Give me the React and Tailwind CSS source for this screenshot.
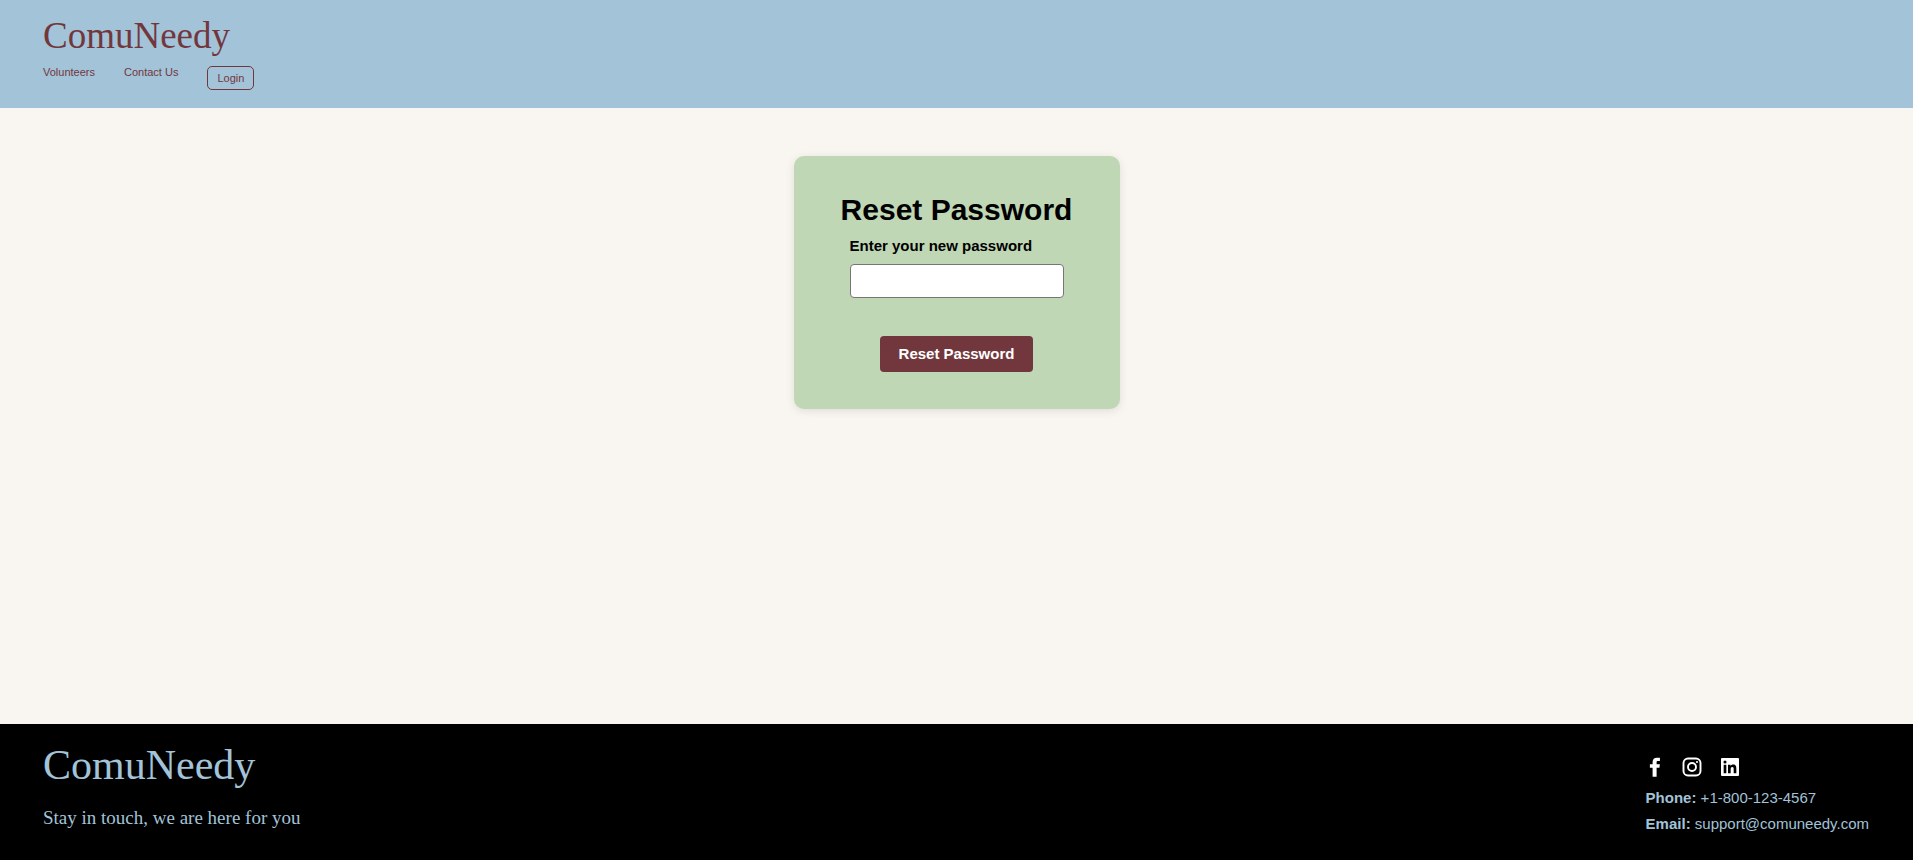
import React from "react";
import { BiLogoLinkedinSquare } from "react-icons/bi";

function FacebookIcon() {
  return (
    <svg width="24" height="24" viewBox="0 0 24 24" fill="currentColor" aria-hidden="true">
      <path d="M17.9 2.7v3.4h-2c-.9 0-1.3.4-1.3 1.3v1.9h3.3l-.5 3.5h-2.8v8.9h-4v-8.9H7.9V9.300h2.700V7c0-2.800 1.700-4.300 4.300-4.300z" />
    </svg>
  );
}

function InstagramIcon() {
  return (
    <svg width="24" height="24" viewBox="0 0 24 24" fill="none" stroke="currentColor" strokeWidth="1.900" aria-hidden="true">
      <rect x="3.500" y="3.500" width="17" height="17" rx="4.500" />
      <circle cx="12" cy="12" r="4" />
      <circle cx="17" cy="7" r="1.100" fill="currentColor" stroke="none" />
    </svg>
  );
}

function Header() {
  return (
    <header className="bg-[#a2c3d8] px-[43px] pt-4 pb-[18px] text-[#72373d]">
      <a href="#" className="block font-['Baskerville','Liberation_Serif',serif] text-[37px] leading-[40px]">
        ComuNeedy
      </a>
      <nav className="mt-[10px] flex items-start gap-[29px] text-[11px] leading-3">
        <a href="#volunteers">Volunteers</a>
        <a href="#contact">Contact Us</a>
        <a href="#login" className="rounded-[5px] border border-[#72373d] px-[9px] py-[5px]">Login</a>
      </nav>
    </header>
  );
}

function ResetForm() {
  return (
    <form
      onSubmit={(e) => e.preventDefault()}
      className="flex w-[326px] flex-col items-center rounded-[10px] bg-[#bfd7b5] px-10 pt-9 pb-[37px] shadow-[0_2px_10px_rgba(0,0,0,0.1)]"
    >
      <h1 className="text-[30px] leading-9 font-bold whitespace-nowrap">Reset Password</h1>
      <div className="mt-2 flex flex-col">
        <label htmlFor="new-password" className="text-[15px] leading-5 font-bold">
          Enter your new password
        </label>
        <input
          id="new-password"
          type="password"
          className="mt-2 h-[34px] w-[214px] rounded border border-[#767676] bg-white px-2 text-[15px]"
        />
      </div>
      <button type="submit" className="mt-[38px] h-9 rounded bg-[#72373d] px-[19px] text-[15px] font-bold text-white">
        Reset Password
      </button>
    </form>
  );
}

function Footer() {
  return (
    <footer className="flex items-start justify-between bg-black pt-4 pr-11 pb-[23px] pl-[43px] text-[#a2c3d8]">
      <div className="font-['Baskerville','Liberation_Serif',serif]">
        <p className="text-[42px] leading-[50px]">ComuNeedy</p>
        <p className="mt-4 text-[19px] leading-6">Stay in touch, we are here for you</p>
      </div>
      <div className="pt-[15px] text-[15px]">
        <div className="-ml-1 flex gap-[14px] text-white">
          <a href="#facebook" aria-label="Facebook"><FacebookIcon /></a>
          <a href="#instagram" aria-label="Instagram"><InstagramIcon /></a>
          <a href="#linkedin" aria-label="LinkedIn"><BiLogoLinkedinSquare size={24} /></a>
        </div>
        <p className="mt-[6px] leading-[26px]"><strong>Phone:</strong> +1-800-123-4567</p>
        <p className="leading-[26px]"><strong>Email:</strong> support@comuneedy.com</p>
      </div>
    </footer>
  );
}

export default function App() {
  return (
    <div className="flex min-h-screen flex-col bg-[#f9f5f0] font-['Liberation_Sans',Arial,sans-serif] text-black">
      <Header />
      <main className="flex flex-1 items-start justify-center pt-12">
        <ResetForm />
      </main>
      <Footer />
    </div>
  );
}
